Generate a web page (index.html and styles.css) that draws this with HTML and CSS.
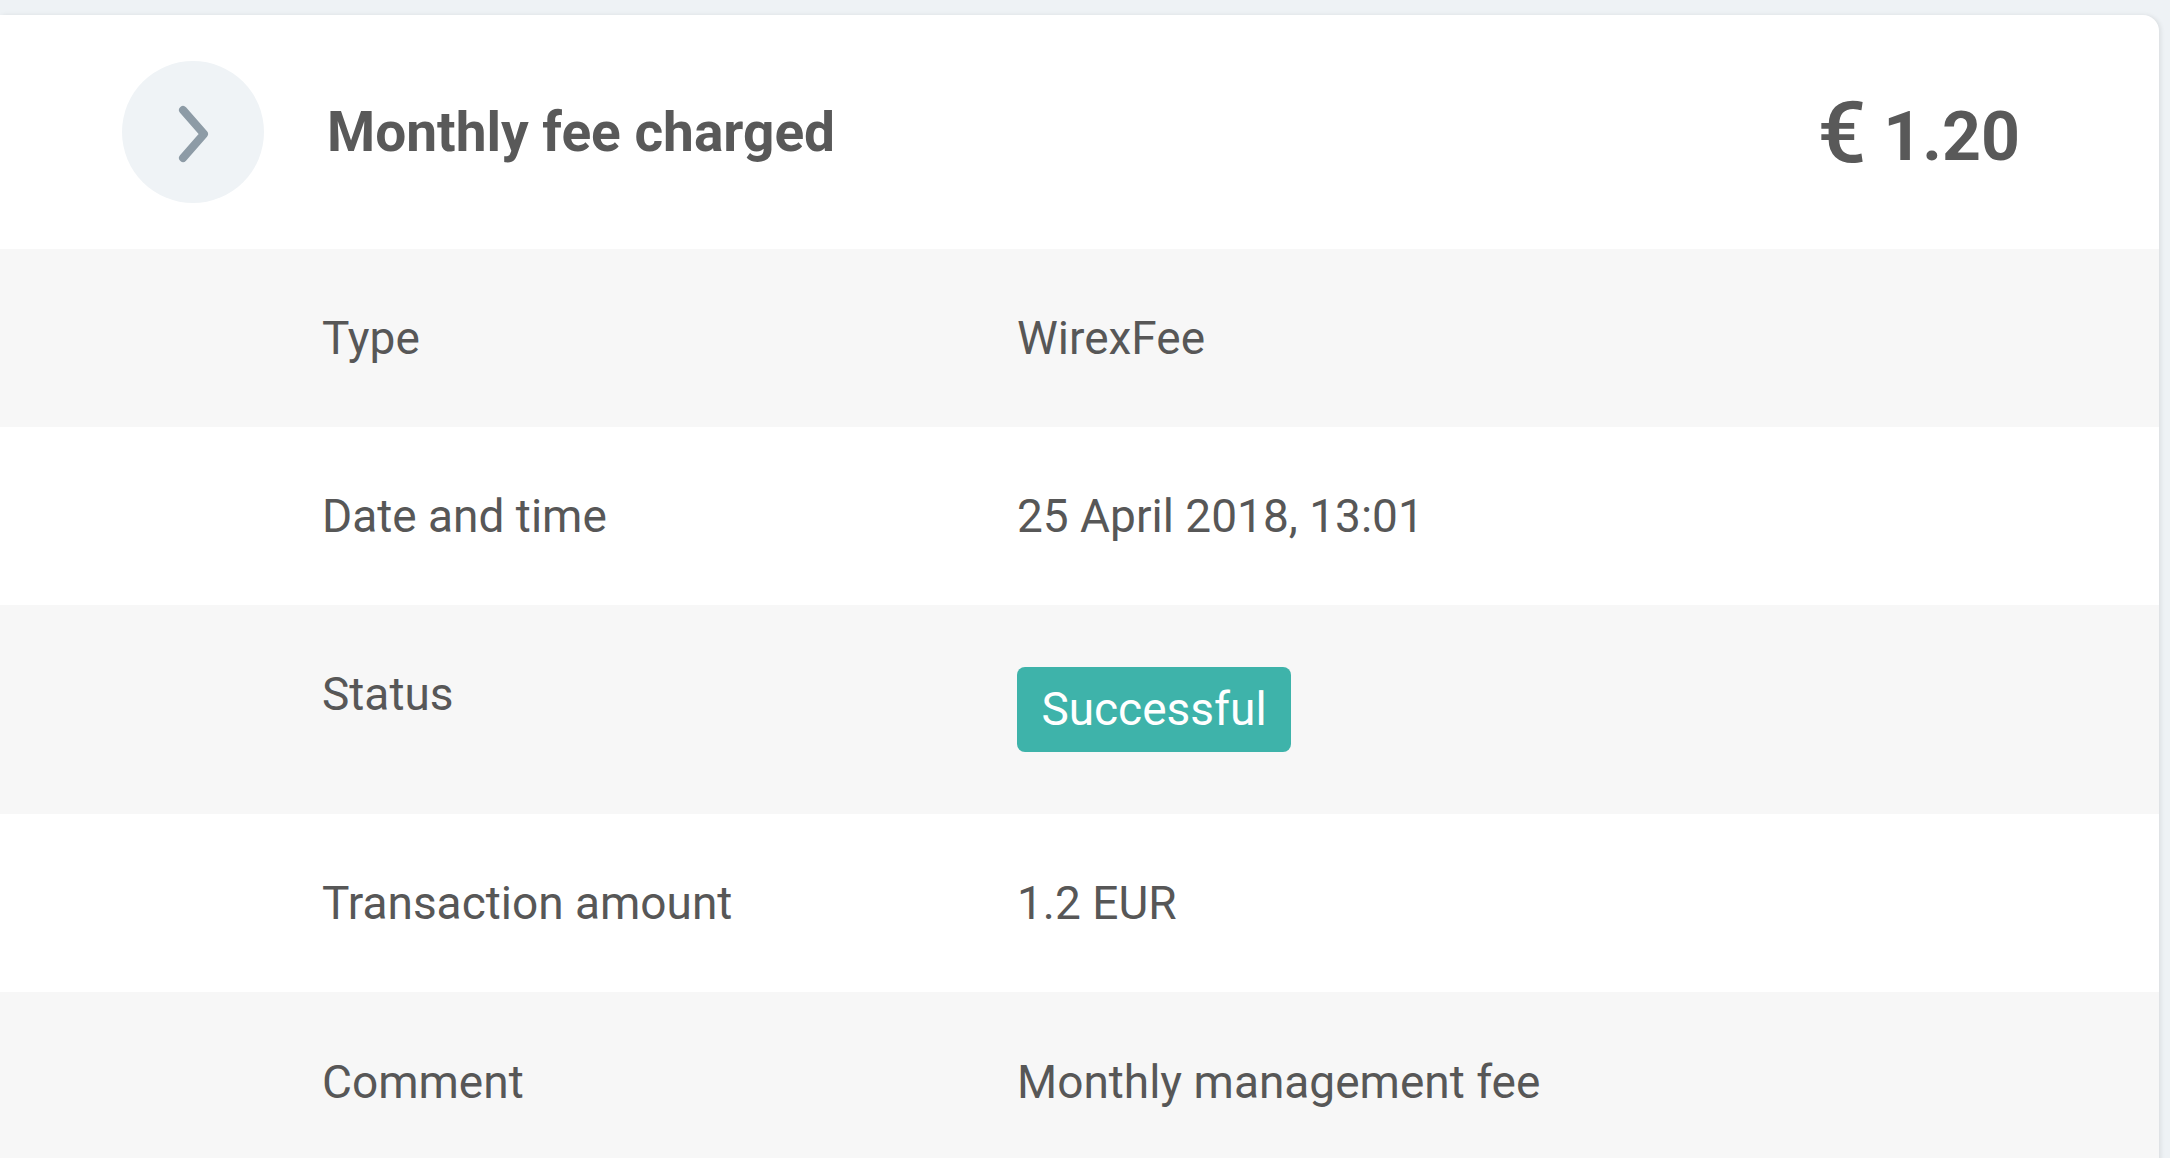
FILE: index.html
```html
<!DOCTYPE html>
<html lang="en">
<head>
<meta charset="utf-8">
<title>Monthly fee charged</title>
<link rel="stylesheet" href="styles.css">
</head>
<body>
<div class="card">
  <div class="header">
    <div class="toggle">
      <svg width="40" height="60" viewBox="0 0 40 60" aria-hidden="true">
        <path d="M9 7 L30 31 L9 55" fill="none" stroke="#8d9ba6" stroke-width="8" stroke-linecap="round" stroke-linejoin="round"/>
      </svg>
    </div>
    <div class="title">Monthly fee charged</div>
    <div class="amount"><span class="currency">€</span> 1.20</div>
  </div>
  <div class="row shade">
    <div class="label">Type</div>
    <div class="value">WirexFee</div>
  </div>
  <div class="row">
    <div class="label">Date and time</div>
    <div class="value">25 April 2018, 13:01</div>
  </div>
  <div class="row shade status">
    <div class="label">Status</div>
    <div class="value"><span class="badge">Successful</span></div>
  </div>
  <div class="row">
    <div class="label">Transaction amount</div>
    <div class="value">1.2 EUR</div>
  </div>
  <div class="row shade last">
    <div class="label">Comment</div>
    <div class="value">Monthly management fee</div>
  </div>
</div>
</body>
</html>
```
FILE: styles.css
```css
html, body {
  margin: 0;
  padding: 0;
}
body {
  background: #eef2f5;
  font-family: Roboto, "Liberation Sans", sans-serif;
  color: #575757;
  height: 1158px;
  overflow: hidden;
}
.card {
  margin-top: 15px;
  width: 2159px;
  background: #ffffff;
  border-top-right-radius: 16px;
  box-shadow: 2px 0 4px rgba(0, 0, 0, 0.08);
  overflow: hidden;
}
.header {
  height: 234px;
  display: flex;
  align-items: center;
  padding-left: 122px;
  padding-right: 139px;
}
.toggle {
  width: 142px;
  height: 142px;
  border-radius: 50%;
  background: #eff3f6;
  display: flex;
  align-items: center;
  justify-content: center;
  flex-shrink: 0;
}
.toggle svg {
  margin-left: 2px;
  margin-top: 2px;
}
.title {
  margin-left: 63px;
  font-size: 55px;
  font-weight: 700;
  color: #595959;
  flex: 1;
}
.amount {
  font-size: 68px;
  font-weight: 700;
  color: #595959;
  white-space: nowrap;
}
.currency {
  font-size: 86px;
  font-weight: 500;
  vertical-align: -2px;
}
.row {
  display: flex;
  align-items: center;
  height: 178px;
  padding-left: 322px;
  font-size: 46px;
  line-height: 55px;
}
.shade {
  background: #f7f7f7;
}
.row.status {
  height: auto;
  align-items: flex-start;
  padding-top: 62px;
  padding-bottom: 62px;
}
.row.last {
  height: 180px;
}
.label {
  width: 695px;
  flex-shrink: 0;
}
.value {
  flex: 1;
}
.badge {
  display: inline-flex;
  align-items: center;
  justify-content: center;
  height: 85px;
  width: 274px;
  box-sizing: border-box;
  background: #3eb3aa;
  color: #ffffff;
  border-radius: 8px;
}
```
